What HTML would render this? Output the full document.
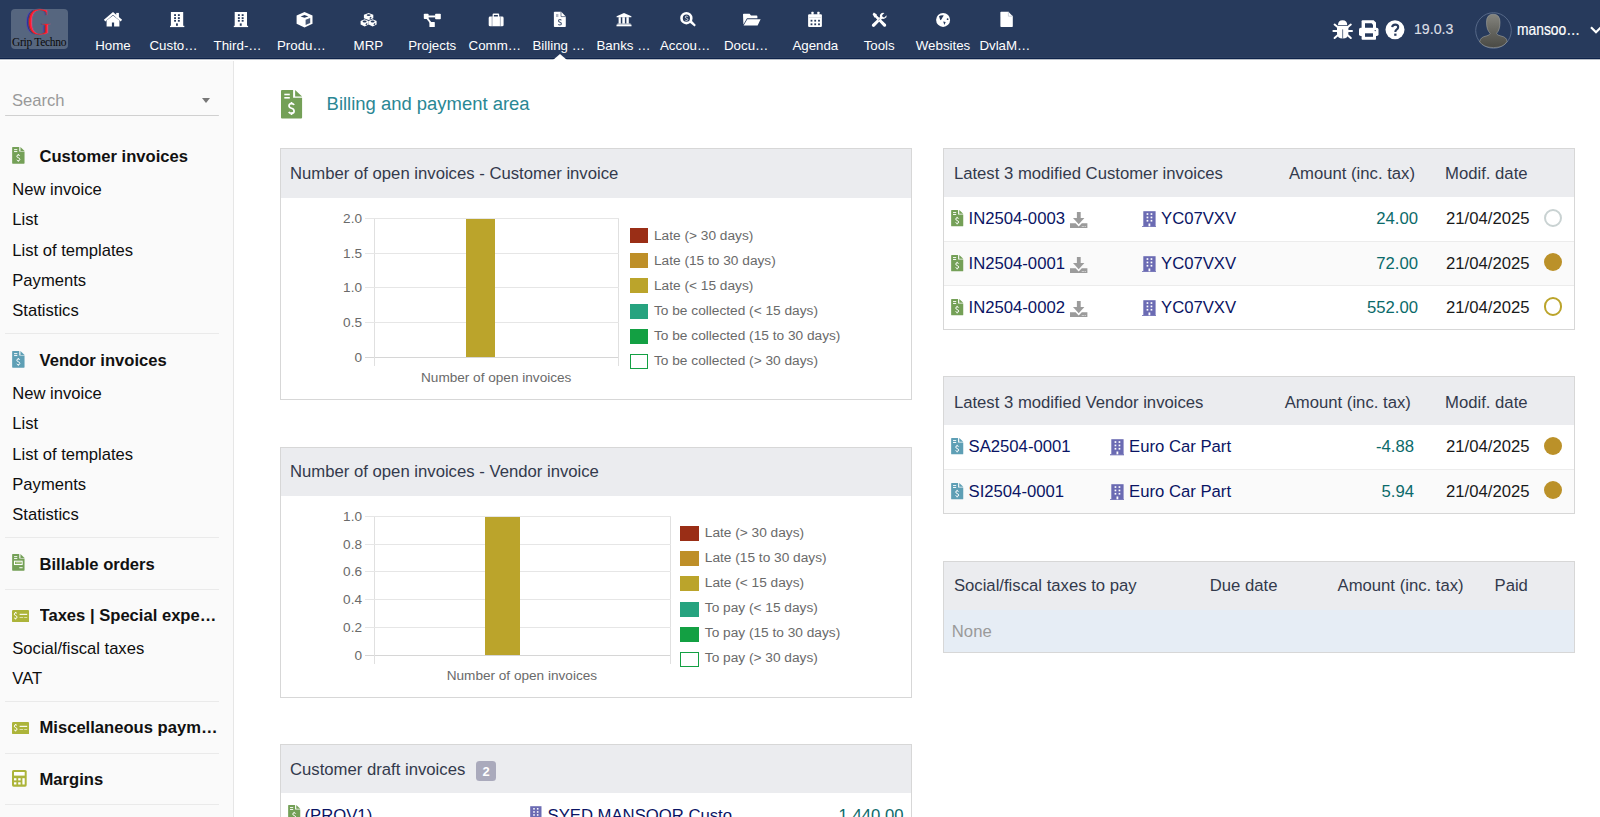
<!DOCTYPE html>
<html><head><meta charset="utf-8">
<style>
*{box-sizing:border-box;margin:0;padding:0}
html,body{width:1600px;height:817px;overflow:hidden;background:#fff;font-family:"Liberation Sans",sans-serif;color:#222}
.abs{position:absolute}
.t{position:absolute;white-space:nowrap;line-height:20px}
</style></head><body>

<div class="abs" style="left:0;top:0;width:1600px;height:58px;background:#273a5c"></div>
<div class="abs" style="left:0;top:57px;width:1600px;height:1px;background:#2c3f61"></div>
<div class="abs" style="left:0;top:58px;width:1600px;height:1px;background:#0d2249"></div>
<div class="abs" style="left:0;top:59px;width:1600px;height:1px;background:#b9bfc8"></div>
<div class="abs" style="left:11px;top:9px;width:57px;height:40px;border-radius:4px;background:#56667f"></div>
<div class="abs" style="left:24.5px;top:1.7px;font-family:'Liberation Serif',serif;font-size:39px;line-height:39px;color:#2b2bb0;transform:scaleX(0.87);transform-origin:0 0;-webkit-text-stroke:0.7px #56667f">G</div>
<div class="abs" style="left:27px;top:1.7px;font-family:'Liberation Serif',serif;font-size:39px;line-height:39px;color:#ff1a2a;transform:scaleX(0.85);transform-origin:0 0;-webkit-text-stroke:0.7px #56667f">G</div>
<div class="abs" style="left:12px;top:36px;width:57px;font-family:'Liberation Serif',serif;font-size:11.5px;line-height:12px;color:#0a0a0a;letter-spacing:-0.3px;white-space:nowrap">Grip Techno</div>
<div class="t" style="left:73.0px;width:80px;text-align:center;top:35.6px;font-size:13.3px;color:#fff">Home</div>
<div class="t" style="left:149.5px;top:35.6px;font-size:13.3px;color:#fff">Custo…</div>
<div class="t" style="left:213.6px;top:35.6px;font-size:13.3px;color:#fff">Third-…</div>
<div class="t" style="left:277px;top:35.6px;font-size:13.3px;color:#fff">Produ…</div>
<div class="t" style="left:328.4px;width:80px;text-align:center;top:35.6px;font-size:13.3px;color:#fff">MRP</div>
<div class="t" style="left:392.25px;width:80px;text-align:center;top:35.6px;font-size:13.3px;color:#fff">Projects</div>
<div class="t" style="left:468.6px;top:35.6px;font-size:13.3px;color:#fff">Comm…</div>
<div class="t" style="left:532.5px;top:35.6px;font-size:13.3px;color:#fff">Billing …</div>
<div class="t" style="left:596.5px;top:35.6px;font-size:13.3px;color:#fff">Banks …</div>
<div class="t" style="left:660px;top:35.6px;font-size:13.3px;color:#fff">Accou…</div>
<div class="t" style="left:724px;top:35.6px;font-size:13.3px;color:#fff">Docu…</div>
<div class="t" style="left:775.35px;width:80px;text-align:center;top:35.6px;font-size:13.3px;color:#fff">Agenda</div>
<div class="t" style="left:839.2px;width:80px;text-align:center;top:35.6px;font-size:13.3px;color:#fff">Tools</div>
<div class="t" style="left:903.0500000000001px;width:80px;text-align:center;top:35.6px;font-size:13.3px;color:#fff">Websites</div>
<div class="t" style="left:979.4px;top:35.6px;font-size:13.3px;color:#fff">DvlaM…</div>
<svg class="abs" style="left:0;top:0" width="1600" height="59" viewBox="0 0 1600 59"><path d="M104.6 20.6 L113 13.4 L121.4 20.6" fill="none" stroke="#fff" stroke-width="2.1" stroke-linejoin="miter"/><path d="M106.6 20.6 L113 15.4 L119.4 20.6 V26.4 H114.1 V22.6 H111.9 V26.4 H106.6 Z" fill="#fff"/><rect x="116.2" y="12.9" width="2.7" height="4.6" fill="#fff"/><rect x="170.9" y="12" width="12.3" height="14" fill="#fff"/><rect x="170" y="25.8" width="14.3" height="1.3" fill="#fff"/><rect x="174.1" y="14.2" width="1.9" height="1.8" fill="#273a5c"/><rect x="174.1" y="17.2" width="1.9" height="1.8" fill="#273a5c"/><rect x="174.1" y="19.9" width="1.9" height="1.8" fill="#273a5c"/><rect x="177.9" y="14.2" width="1.9" height="1.8" fill="#273a5c"/><rect x="177.9" y="17.2" width="1.9" height="1.8" fill="#273a5c"/><rect x="177.9" y="19.9" width="1.9" height="1.8" fill="#273a5c"/><rect x="176" y="23.4" width="1.9" height="2.4" fill="#273a5c"/><rect x="234.70000000000002" y="12" width="12.3" height="14" fill="#fff"/><rect x="233.8" y="25.8" width="14.3" height="1.3" fill="#fff"/><rect x="237.9" y="14.2" width="1.9" height="1.8" fill="#273a5c"/><rect x="237.9" y="17.2" width="1.9" height="1.8" fill="#273a5c"/><rect x="237.9" y="19.9" width="1.9" height="1.8" fill="#273a5c"/><rect x="241.70000000000002" y="14.2" width="1.9" height="1.8" fill="#273a5c"/><rect x="241.70000000000002" y="17.2" width="1.9" height="1.8" fill="#273a5c"/><rect x="241.70000000000002" y="19.9" width="1.9" height="1.8" fill="#273a5c"/><rect x="239.8" y="23.4" width="1.9" height="2.4" fill="#273a5c"/><path d="M304.5 12 L312.5 15.4 V23.8 L304.5 27.4 L296.6 23.8 V15.4 Z" fill="#fff"/><path d="M300.6 16.4 L304.5 15 L308.4 16.4 L304.5 17.8 Z" fill="#273a5c"/><path d="M305.6 19.8 L310.2 17.9 V23 L305.6 25 Z" fill="#273a5c" opacity="0.85"/><path d="M363.90000000000003 14.700000000000001 L368.6 12.9 L373.3 14.700000000000001 V18.3 L368.6 20.1 L363.90000000000003 18.3 Z" fill="#fff"/><ellipse cx="368.6" cy="15.100000000000001" rx="2" ry="0.9" fill="#273a5c"/><path d="M369.8 18.5 L371.20000000000005 17.1" stroke="#273a5c" stroke-width="1.1"/><path d="M360.6 21.1 L364.6 19.3 L368.6 21.1 V24.599999999999998 L364.6 26.4 L360.6 24.599999999999998 Z" fill="#fff"/><ellipse cx="364.6" cy="21.5" rx="2" ry="0.9" fill="#273a5c"/><path d="M365.8 24.9 L367.20000000000005 23.5" stroke="#273a5c" stroke-width="1.1"/><path d="M368.6 21.1 L372.6 19.3 L376.6 21.1 V24.599999999999998 L372.6 26.4 L368.6 24.599999999999998 Z" fill="#fff"/><ellipse cx="372.6" cy="21.5" rx="2" ry="0.9" fill="#273a5c"/><path d="M373.8 24.9 L375.20000000000005 23.5" stroke="#273a5c" stroke-width="1.1"/><rect x="423.8" y="13.7" width="4.8" height="5.3" rx="0.8" fill="#fff"/><rect x="435.1" y="13.7" width="5.7" height="5.6" rx="0.8" fill="#fff"/><rect x="429.4" y="22" width="5.4" height="5.1" rx="0.6" fill="#fff"/><rect x="428" y="15.5" width="7.5" height="1.9" fill="#fff"/><path d="M426.2 18.4 L427.8 17.4 L431.6 22.4 L430 23.2 Z" fill="#fff"/><path d="M492.6 17 V14.6 Q492.6 13.6 493.6 13.6 H498.2 Q499.2 13.6 499.2 14.6 V17 H497.9 V15 H493.9 V17 Z" fill="#fff"/><rect x="488.7" y="16.6" width="14.9" height="9.7" rx="1.4" fill="#fff"/><rect x="491.7" y="16.6" width="0.7" height="9.7" fill="#273a5c" opacity="0.55"/><rect x="499.9" y="16.6" width="0.7" height="9.7" fill="#273a5c" opacity="0.55"/><path d="M553.9 12.6 Q553.9 11.8 554.7 11.8 H561.2 L565.8 16.4 V26.3 Q565.8 27.1 565 27.1 H554.7 Q553.9 27.1 553.9 26.3 Z" fill="#fff"/><path d="M561 11.8 V16.6 H565.8" fill="none" stroke="#273a5c" stroke-width="0.9" opacity="0.7"/><rect x="556" y="14" width="2.4" height="3" fill="#b4b8c4"/><path d="M561.3 20.4 Q561 19.5 559.9 19.5 Q558.5 19.5 558.5 20.7 Q558.5 21.8 559.9 22.2 Q561.4 22.6 561.4 23.8 Q561.4 25 559.9 25 Q558.7 25 558.4 24.2" fill="none" stroke="#273a5c" stroke-width="1.1" opacity="0.85"/><path d="M624 13.1 L631.4 16.2 V17.2 H616.6 V16.2 Z" fill="#fff"/><rect x="618.6" y="17.2" width="2.2" height="6.4" fill="#fff"/><rect x="622.3" y="17.2" width="2.6" height="6.4" fill="#fff"/><rect x="626.4" y="17.2" width="2.4" height="6.4" fill="#fff"/><rect x="617.4" y="23.6" width="13.2" height="1" fill="#fff"/><rect x="616.5" y="24.6" width="15" height="1.7" fill="#fff"/><circle cx="686.4" cy="18.2" r="4.9" fill="none" stroke="#fff" stroke-width="2.6"/><path d="M689.6 22.4 L691.6 20.6 L695.6 24.8 Q695.7 26 694.5 26.6 Z" fill="#fff"/><path d="M687.9 16.8 Q687.6 16.1 686.5 16.1 Q685.3 16.1 685.3 17.1 Q685.3 18 686.5 18.3 Q687.8 18.6 687.8 19.5 Q687.8 20.5 686.5 20.5 Q685.4 20.5 685.1 19.8" fill="none" stroke="#dfe3ea" stroke-width="0.9"/><path d="M743 14.6 Q743 13.8 743.8 13.8 H749.6 L751 15.6 H756.6 Q757.4 15.6 757.4 16.4 V18.3 H747 L743.4 24.6 Z" fill="#fff"/><path d="M747.3 19.2 H760.6 L757.6 25.5 H743.6 Z" fill="#fff"/><rect x="808.1" y="14.2" width="13.8" height="12.9" rx="1" fill="#fff"/><rect x="811.4" y="11.8" width="2.2" height="3" rx="0.4" fill="#fff"/><rect x="817.3" y="11.8" width="2.2" height="3" rx="0.4" fill="#fff"/><rect x="809" y="17.4" width="12" height="0.5" fill="#273a5c" opacity="0.3"/><rect x="810.6" y="19.8" width="1.8" height="1.8" fill="#273a5c"/><rect x="810.6" y="23.400000000000002" width="1.8" height="1.8" fill="#273a5c"/><rect x="814.3000000000001" y="19.8" width="1.8" height="1.8" fill="#273a5c"/><rect x="814.3000000000001" y="23.400000000000002" width="1.8" height="1.8" fill="#273a5c"/><rect x="818.1" y="19.8" width="1.8" height="1.8" fill="#273a5c"/><rect x="818.1" y="23.400000000000002" width="1.8" height="1.8" fill="#273a5c"/><path d="M872.6 14.2 L873.9 12.5 L876.8 14.6 V15.6 L886 24.2 Q886.6 25.6 885.6 26.5 Q884.5 27.2 883.4 26.3 L875.3 17.5 H874.4 Z" fill="#fff"/><path d="M886.6 15.2 L884.3 17.5 L882.6 17 L882.1 15.3 L884.4 13 Q881.5 12.1 880.2 14.4 Q879.6 15.7 880 16.9 L872.2 24.2 Q871.3 25.6 872.4 26.6 Q873.5 27.4 874.6 26.5 L882 18.8 Q883.4 19.2 884.7 18.6 Q887.2 17.4 886.6 15.2 Z" fill="#fff"/><path d="M878.2 20.5 L880.2 18.6" stroke="#273a5c" stroke-width="0.6" opacity="0.7"/><circle cx="943.1" cy="19.9" r="7" fill="#fff"/><path d="M939 16.2 Q940.6 15 943.8 15.4 L942.6 17.2 L941.4 19.4 L940.3 20.3 Z" fill="#273a5c"/><path d="M943.2 21.6 L945.7 22 L944.4 25 Z" fill="#273a5c"/><circle cx="947.6" cy="19.2" r="0.9" fill="#273a5c"/><path d="M1000.4 12.6 Q1000.4 11.8 1001.2 11.8 H1008.4 L1012.8 16.2 V26.3 Q1012.8 27.1 1012 27.1 H1001.2 Q1000.4 27.1 1000.4 26.3 Z" fill="#fff"/><path d="M1008.4 11.8 V16.2 H1012.8" fill="none" stroke="#c0c6d2" stroke-width="0.8"/></svg>
<div class="abs" style="left:552.6px;top:54px;width:0;height:0;border-left:7px solid transparent;border-right:7px solid transparent;border-bottom:6px solid #fff"></div>
<svg class="abs" style="left:0;top:0" width="1600" height="59" viewBox="0 0 1600 59"><path d="M1338 25.3 Q1338 20.3 1342.6 20.3 Q1347.2 20.3 1347.2 25.3 Z" fill="#fff"/><path d="M1337 26.1 H1348.4 V33 Q1348.4 38.6 1342.7 38.6 Q1337 38.6 1337 33 Z" fill="#fff"/><g stroke="#fff" stroke-width="2" stroke-linecap="round"><path d="M1334.6 24.6 L1338.2 27.6"/><path d="M1350.8 24.6 L1347.2 27.6"/><path d="M1333.4 31 H1337.6"/><path d="M1352 31 H1347.8"/><path d="M1334.6 38 L1338 35"/><path d="M1350.8 38 L1347.4 35"/></g><rect x="1342.4" y="29.4" width="0.7" height="9.2" fill="#273a5c"/><path d="M1361.6 21.3 Q1361.6 20.3 1362.6 20.3 H1373.6 L1376 22.6 V28.5 H1361.6 Z" fill="#fff"/><path d="M1365 23.3 H1371.6 L1373 24.7 V28.5 H1365 Z" fill="#273a5c"/><rect x="1359" y="27.8" width="19.5" height="8.2" rx="1.8" fill="#fff"/><rect x="1361.6" y="32.4" width="14.4" height="7.4" rx="0.8" fill="#fff"/><rect x="1365" y="33.3" width="8" height="3.5" fill="#273a5c"/><circle cx="1375.2" cy="30.6" r="0.7" fill="#273a5c"/><circle cx="1395" cy="29.8" r="9.5" fill="#fff"/><path d="M1392.2 27.2 Q1392.4 24.6 1395.2 24.6 Q1398.2 24.6 1398.2 27.1 Q1398.2 28.6 1396.6 29.6 Q1395.4 30.4 1395.4 31.6 V32" fill="none" stroke="#273a5c" stroke-width="2.1"/><rect x="1394.2" y="33.6" width="2.3" height="2.2" fill="#273a5c"/></svg>
<div class="t" style="left:1413.7px;top:18.6px;font-size:14.8px;color:#dcdfe5;transform:scaleX(0.955);transform-origin:0 0;-webkit-text-stroke:0.15px #dcdfe5">19.0.3</div>
<svg class="abs" style="left:1475px;top:12px;" width="37" height="37" viewBox="0 0 37 37"><defs><linearGradient id="ag" x1="0" y1="0" x2="0" y2="1"><stop offset="0" stop-color="#85857f"/><stop offset="0.55" stop-color="#62625c"/><stop offset="1" stop-color="#4a4a45"/></linearGradient></defs><circle cx="18.5" cy="18.5" r="17.8" fill="none" stroke="#5b6d8c" stroke-width="0.9"/><path d="M11.5 10.2 Q11.5 2.2 18.2 2.2 Q25 2.2 25 10.2 Q25 18 21.6 21.3 Q21.8 23.3 26 24 Q32 25.2 32 29.6 Q28.5 35.6 18.5 35.6 Q8.5 35.6 4.6 29.8 Q5.4 25 11.2 24 Q15 23.2 15.2 21.3 Q11.5 18 11.5 10.2 Z" fill="url(#ag)" stroke="#b0b0a8" stroke-width="0.5"/></svg>
<div class="t" style="left:1517px;top:19.6px;font-size:16px;color:#fff;transform:scaleX(0.864);transform-origin:0 0;-webkit-text-stroke:0.2px #fff">mansoo…</div>
<svg class="abs" style="left:1590px;top:26px;" width="12" height="8" viewBox="0 0 12 8"><path d="M1 1.2 L6 6.2 L11 1.2" fill="none" stroke="#fff" stroke-width="2.2"/></svg>
<div class="abs" style="left:0;top:61px;width:233px;height:756px;background:#fafafa"></div>
<div class="abs" style="left:233px;top:61px;width:1px;height:756px;background:#e6e6e6"></div>
<div class="t" style="left:12px;top:90.5px;font-size:16.6px;color:#999">Search</div>
<div class="abs" style="left:202px;top:98px;width:0;height:0;border-left:4.5px solid transparent;border-right:4.5px solid transparent;border-top:5px solid #777"></div>
<div class="abs" style="left:5px;top:115px;width:214px;height:1px;background:#d0d0d0;border-radius:1px"></div>
<svg class="abs" style="left:11.9px;top:147.3px;overflow:visible" width="12.7" height="16.7" viewBox="0 0 21.1 28.4"><path d="M0 1 Q0 0 1 0 H12.1 V7.8 H21.1 V27.4 Q21.1 28.4 20.1 28.4 H1 Q0 28.4 0 27.4 Z" fill="#74a057"/><path d="M14.1 0 V6.6 H21.1 Z" fill="#74a057"/><rect x="3.3" y="3.7" width="5.5" height="1.6" fill="#fff"/><rect x="3.3" y="7" width="5.5" height="1.6" fill="#fff"/><path d="M13.1 15 Q12.5 13.7 10.5 13.7 Q8 13.7 8 15.8 Q8 17.6 10.5 18.3 Q13.1 19 13.1 21.2 Q13.1 23.2 10.5 23.2 Q8.4 23.2 7.8 21.8 M10.5 12 V13.7 M10.5 23.2 V25" fill="none" stroke="#fff" stroke-width="1.7"/></svg>
<div class="t" style="left:39.5px;top:147px;font-size:16.6px;font-weight:bold;color:#111">Customer invoices</div>
<div class="t" style="left:12.3px;top:180px;font-size:16.6px;color:#0e0e0e">New invoice</div>
<div class="t" style="left:12.3px;top:210px;font-size:16.6px;color:#0e0e0e">List</div>
<div class="t" style="left:12.3px;top:240.5px;font-size:16.6px;color:#0e0e0e">List of templates</div>
<div class="t" style="left:12.3px;top:271px;font-size:16.6px;color:#0e0e0e">Payments</div>
<div class="t" style="left:12.3px;top:301px;font-size:16.6px;color:#0e0e0e">Statistics</div>
<div class="abs" style="left:5px;top:333px;width:214px;height:1px;background:#eaeaea"></div>
<svg class="abs" style="left:11.9px;top:351.3px;overflow:visible" width="12.7" height="16.7" viewBox="0 0 21.1 28.4"><path d="M0 1 Q0 0 1 0 H12.1 V7.8 H21.1 V27.4 Q21.1 28.4 20.1 28.4 H1 Q0 28.4 0 27.4 Z" fill="#5e9fb5"/><path d="M14.1 0 V6.6 H21.1 Z" fill="#5e9fb5"/><rect x="3.3" y="3.7" width="5.5" height="1.6" fill="#fff"/><rect x="3.3" y="7" width="5.5" height="1.6" fill="#fff"/><path d="M13.1 15 Q12.5 13.7 10.5 13.7 Q8 13.7 8 15.8 Q8 17.6 10.5 18.3 Q13.1 19 13.1 21.2 Q13.1 23.2 10.5 23.2 Q8.4 23.2 7.8 21.8 M10.5 12 V13.7 M10.5 23.2 V25" fill="none" stroke="#fff" stroke-width="1.7"/></svg>
<div class="t" style="left:39.5px;top:351px;font-size:16.6px;font-weight:bold;color:#111">Vendor invoices</div>
<div class="t" style="left:12.3px;top:384px;font-size:16.6px;color:#0e0e0e">New invoice</div>
<div class="t" style="left:12.3px;top:414px;font-size:16.6px;color:#0e0e0e">List</div>
<div class="t" style="left:12.3px;top:444.5px;font-size:16.6px;color:#0e0e0e">List of templates</div>
<div class="t" style="left:12.3px;top:475px;font-size:16.6px;color:#0e0e0e">Payments</div>
<div class="t" style="left:12.3px;top:505px;font-size:16.6px;color:#0e0e0e">Statistics</div>
<div class="abs" style="left:5px;top:537px;width:214px;height:1px;background:#eaeaea"></div>
<svg class="abs" style="left:11.9px;top:554.4px;" width="12.7" height="16.7" viewBox="0 0 21.1 28.4"><path d="M0 1 Q0 0 1 0 H12.1 V7.8 H21.1 V27.4 Q21.1 28.4 20.1 28.4 H1 Q0 28.4 0 27.4 Z" fill="#74a057"/><path d="M14.1 0 V6.6 H21.1 Z" fill="#74a057"/><rect x="3.3" y="3.7" width="5.5" height="1.6" fill="#fff"/><rect x="3.3" y="7" width="5.5" height="1.6" fill="#fff"/><rect x="4" y="12.3" width="13" height="5.6" fill="none" stroke="#fff" stroke-width="1.8"/><rect x="6" y="14.4" width="9" height="1.4" fill="#e0e8b0"/><rect x="12.2" y="22.5" width="5.6" height="1.7" fill="#fff"/></svg>
<div class="t" style="left:39.5px;top:555px;font-size:16.6px;font-weight:bold;color:#111">Billable orders</div>
<div class="abs" style="left:5px;top:589px;width:214px;height:1px;background:#eaeaea"></div>
<svg class="abs" style="left:11.9px;top:609.8px;" width="17.1" height="12.3" viewBox="0 0 17.1 12.3"><rect x="0" y="0" width="17.1" height="12.3" rx="1.2" fill="#acb43a"/><path d="M5 3.6 Q4.6 2.9 3.6 2.9 Q2.3 2.9 2.3 4.1 Q2.3 5.2 3.6 5.6 Q5 6 5 7.2 Q5 8.4 3.6 8.4 Q2.5 8.4 2.1 7.7 M3.6 2 V2.9 M3.6 8.4 V9.4" fill="none" stroke="#fff" stroke-width="1"/><rect x="7.6" y="3.8" width="7.6" height="1.1" fill="#fff"/><rect x="7.6" y="7" width="3.6" height="0.8" fill="#e8ecc0"/><rect x="12.2" y="7" width="3" height="0.8" fill="#e8ecc0"/></svg>
<div class="t" style="left:39.5px;top:606px;width:180px;overflow:hidden;text-overflow:ellipsis;font-size:16.6px;font-weight:bold;color:#111">Taxes | Special expenses</div>
<div class="t" style="left:12.3px;top:638.5px;font-size:16.6px;color:#0e0e0e">Social/fiscal taxes</div>
<div class="t" style="left:12.3px;top:668.5px;font-size:16.6px;color:#0e0e0e">VAT</div>
<div class="abs" style="left:5px;top:701px;width:214px;height:1px;background:#eaeaea"></div>
<svg class="abs" style="left:11.9px;top:721.8px;" width="17.1" height="12.3" viewBox="0 0 17.1 12.3"><rect x="0" y="0" width="17.1" height="12.3" rx="1.2" fill="#acb43a"/><path d="M5 3.6 Q4.6 2.9 3.6 2.9 Q2.3 2.9 2.3 4.1 Q2.3 5.2 3.6 5.6 Q5 6 5 7.2 Q5 8.4 3.6 8.4 Q2.5 8.4 2.1 7.7 M3.6 2 V2.9 M3.6 8.4 V9.4" fill="none" stroke="#fff" stroke-width="1"/><rect x="7.6" y="3.8" width="7.6" height="1.1" fill="#fff"/><rect x="7.6" y="7" width="3.6" height="0.8" fill="#e8ecc0"/><rect x="12.2" y="7" width="3" height="0.8" fill="#e8ecc0"/></svg>
<div class="t" style="left:39.5px;top:718px;width:180px;overflow:hidden;text-overflow:ellipsis;font-size:16.6px;font-weight:bold;color:#111">Miscellaneous payments</div>
<div class="abs" style="left:5px;top:753px;width:214px;height:1px;background:#eaeaea"></div>
<svg class="abs" style="left:11.9px;top:770.3px;" width="14.7" height="16.7" viewBox="0 0 14.7 16.7"><rect x="0" y="0" width="14.7" height="16.7" rx="1.6" fill="#acb43a"/><rect x="2" y="2" width="10.7" height="3.6" fill="#fff"/><g fill="#fff"><rect x="2" y="8.2" width="2.4" height="2.2"/><rect x="6.2" y="8.2" width="2.4" height="2.2"/><rect x="2" y="12.3" width="2.4" height="2.2"/><rect x="6.2" y="12.3" width="2.4" height="2.2"/><rect x="10.4" y="8.2" width="2.3" height="6.3"/></g></svg>
<div class="t" style="left:39.5px;top:770px;font-size:16.6px;font-weight:bold;color:#111">Margins</div>
<div class="abs" style="left:5px;top:804px;width:214px;height:1px;background:#eaeaea"></div>
<svg class="abs" style="left:281.3px;top:90.2px;overflow:visible" width="21.1" height="28.4" viewBox="0 0 21.1 28.4"><path d="M0 1 Q0 0 1 0 H12.1 V7.8 H21.1 V27.4 Q21.1 28.4 20.1 28.4 H1 Q0 28.4 0 27.4 Z" fill="#74a057"/><path d="M14.1 0 V6.6 H21.1 Z" fill="#74a057"/><rect x="3.3" y="3.7" width="5.5" height="1.6" fill="#fff"/><rect x="3.3" y="7" width="5.5" height="1.6" fill="#fff"/><path d="M13.1 15 Q12.5 13.7 10.5 13.7 Q8 13.7 8 15.8 Q8 17.6 10.5 18.3 Q13.1 19 13.1 21.2 Q13.1 23.2 10.5 23.2 Q8.4 23.2 7.8 21.8 M10.5 12 V13.7 M10.5 23.2 V25" fill="none" stroke="#fff" stroke-width="1.7"/></svg>
<div class="t" style="left:326.6px;top:94.2px;font-size:18.45px;color:#2a8794">Billing and payment area</div>
<div class="abs" style="left:280px;top:148px;width:632px;height:252px;border:1px solid #d7d7d7;background:#fff"></div>
<div class="abs" style="left:281px;top:149px;width:630px;height:49px;background:#ebecef"></div>
<div class="t" style="left:290px;top:164.2px;font-size:16.7px;color:#333a4c;">Number of open invoices - Customer invoice</div>
<div class="abs" style="left:373.5px;top:218.4px;width:245.5px;height:138.9px;border-left:1px solid #e0e0e0;border-right:1px solid #e0e0e0"></div>
<div class="abs" style="left:365px;top:217.9px;width:254px;height:1px;background:#e6e6e6"></div>
<div class="t" style="left:322px;width:40px;text-align:right;top:208.8px;font-size:13.6px;color:#6a6a6a">2.0</div>
<div class="abs" style="left:365px;top:252.625px;width:254px;height:1px;background:#e6e6e6"></div>
<div class="t" style="left:322px;width:40px;text-align:right;top:243.525px;font-size:13.6px;color:#6a6a6a">1.5</div>
<div class="abs" style="left:365px;top:287.35px;width:254px;height:1px;background:#e6e6e6"></div>
<div class="t" style="left:322px;width:40px;text-align:right;top:278.25px;font-size:13.6px;color:#6a6a6a">1.0</div>
<div class="abs" style="left:365px;top:322.07500000000005px;width:254px;height:1px;background:#e6e6e6"></div>
<div class="t" style="left:322px;width:40px;text-align:right;top:312.975px;font-size:13.6px;color:#6a6a6a">0.5</div>
<div class="abs" style="left:365px;top:356.8px;width:254px;height:1px;background:#d6d6d6"></div>
<div class="t" style="left:322px;width:40px;text-align:right;top:347.7px;font-size:13.6px;color:#6a6a6a">0</div>
<div class="abs" style="left:373.5px;top:357.3px;width:1px;height:9px;background:#e0e0e0"></div>
<div class="abs" style="left:618px;top:357.3px;width:1px;height:9px;background:#e0e0e0"></div>
<div class="abs" style="left:466.2px;top:219.4px;width:28.5px;height:137.9px;background:#bba42b"></div>
<div class="t" style="left:421px;top:368px;font-size:13.6px;color:#6a6a6a">Number of open invoices</div>
<div class="abs" style="left:629.5px;top:228.2px;width:18.5px;height:15px;background:#9a2e16"></div>
<div class="t" style="left:654.0px;top:225.7px;font-size:13.7px;color:#6a6a6a">Late (&gt; 30 days)</div>
<div class="abs" style="left:629.5px;top:253.3px;width:18.5px;height:15px;background:#be8f28"></div>
<div class="t" style="left:654.0px;top:250.8px;font-size:13.7px;color:#6a6a6a">Late (15 to 30 days)</div>
<div class="abs" style="left:629.5px;top:278.4px;width:18.5px;height:15px;background:#bba42b"></div>
<div class="t" style="left:654.0px;top:275.9px;font-size:13.7px;color:#6a6a6a">Late (&lt; 15 days)</div>
<div class="abs" style="left:629.5px;top:303.5px;width:18.5px;height:15px;background:#26a37f"></div>
<div class="t" style="left:654.0px;top:301.0px;font-size:13.7px;color:#6a6a6a">To be collected (&lt; 15 days)</div>
<div class="abs" style="left:629.5px;top:328.6px;width:18.5px;height:15px;background:#13a043"></div>
<div class="t" style="left:654.0px;top:326.1px;font-size:13.7px;color:#6a6a6a">To be collected (15 to 30 days)</div>
<div class="abs" style="left:629.5px;top:353.7px;width:18.5px;height:15px;border:1.3px solid #13a043;background:#fff"></div>
<div class="t" style="left:654.0px;top:351.2px;font-size:13.7px;color:#6a6a6a">To be collected (&gt; 30 days)</div>
<div class="abs" style="left:280px;top:447px;width:632px;height:251px;border:1px solid #d7d7d7;background:#fff"></div>
<div class="abs" style="left:281px;top:448px;width:630px;height:48px;background:#ebecef"></div>
<div class="t" style="left:290px;top:462.2px;font-size:16.7px;color:#333a4c;">Number of open invoices - Vendor invoice</div>
<div class="abs" style="left:373.5px;top:516.4px;width:297.5px;height:138.89999999999998px;border-left:1px solid #e0e0e0;border-right:1px solid #e0e0e0"></div>
<div class="abs" style="left:365px;top:515.9px;width:306px;height:1px;background:#e6e6e6"></div>
<div class="t" style="left:322px;width:40px;text-align:right;top:506.79999999999995px;font-size:13.6px;color:#6a6a6a">1.0</div>
<div class="abs" style="left:365px;top:543.68px;width:306px;height:1px;background:#e6e6e6"></div>
<div class="t" style="left:322px;width:40px;text-align:right;top:534.5799999999999px;font-size:13.6px;color:#6a6a6a">0.8</div>
<div class="abs" style="left:365px;top:571.4599999999999px;width:306px;height:1px;background:#e6e6e6"></div>
<div class="t" style="left:322px;width:40px;text-align:right;top:562.3599999999999px;font-size:13.6px;color:#6a6a6a">0.6</div>
<div class="abs" style="left:365px;top:599.24px;width:306px;height:1px;background:#e6e6e6"></div>
<div class="t" style="left:322px;width:40px;text-align:right;top:590.14px;font-size:13.6px;color:#6a6a6a">0.4</div>
<div class="abs" style="left:365px;top:627.02px;width:306px;height:1px;background:#e6e6e6"></div>
<div class="t" style="left:322px;width:40px;text-align:right;top:617.92px;font-size:13.6px;color:#6a6a6a">0.2</div>
<div class="abs" style="left:365px;top:654.8px;width:306px;height:1px;background:#d6d6d6"></div>
<div class="t" style="left:322px;width:40px;text-align:right;top:645.6999999999999px;font-size:13.6px;color:#6a6a6a">0</div>
<div class="abs" style="left:373.5px;top:655.3px;width:1px;height:9px;background:#e0e0e0"></div>
<div class="abs" style="left:670px;top:655.3px;width:1px;height:9px;background:#e0e0e0"></div>
<div class="abs" style="left:484.5px;top:517.4px;width:35.3px;height:137.89999999999998px;background:#bba42b"></div>
<div class="t" style="left:446.7px;top:666px;font-size:13.6px;color:#6a6a6a">Number of open invoices</div>
<div class="abs" style="left:680.3px;top:526.2px;width:18.5px;height:15px;background:#9a2e16"></div>
<div class="t" style="left:704.8px;top:522.8000000000001px;font-size:13.7px;color:#6a6a6a">Late (&gt; 30 days)</div>
<div class="abs" style="left:680.3px;top:551.3000000000001px;width:18.5px;height:15px;background:#be8f28"></div>
<div class="t" style="left:704.8px;top:547.9000000000001px;font-size:13.7px;color:#6a6a6a">Late (15 to 30 days)</div>
<div class="abs" style="left:680.3px;top:576.4000000000001px;width:18.5px;height:15px;background:#bba42b"></div>
<div class="t" style="left:704.8px;top:573.0000000000001px;font-size:13.7px;color:#6a6a6a">Late (&lt; 15 days)</div>
<div class="abs" style="left:680.3px;top:601.5px;width:18.5px;height:15px;background:#26a37f"></div>
<div class="t" style="left:704.8px;top:598.1px;font-size:13.7px;color:#6a6a6a">To pay (&lt; 15 days)</div>
<div class="abs" style="left:680.3px;top:626.6px;width:18.5px;height:15px;background:#13a043"></div>
<div class="t" style="left:704.8px;top:623.2px;font-size:13.7px;color:#6a6a6a">To pay (15 to 30 days)</div>
<div class="abs" style="left:680.3px;top:651.7px;width:18.5px;height:15px;border:1.3px solid #13a043;background:#fff"></div>
<div class="t" style="left:704.8px;top:648.3000000000001px;font-size:13.7px;color:#6a6a6a">To pay (&gt; 30 days)</div>
<div class="abs" style="left:280px;top:744px;width:632px;height:200px;border:1px solid #d7d7d7;background:#fff"></div>
<div class="abs" style="left:281px;top:745px;width:630px;height:48px;background:#ebecef"></div>
<div class="t" style="left:290px;top:759.7px;font-size:16.7px;color:#333a4c;">Customer draft invoices</div>
<div class="abs" style="left:476px;top:760.5px;width:20px;height:20.5px;border-radius:3.5px;background:#aaaabc;color:#fff;font-size:13px;font-weight:bold;text-align:center;line-height:21px">2</div>
<svg class="abs" style="left:288px;top:805.2px;overflow:visible" width="12.4" height="16.3" viewBox="0 0 21.1 28.4"><path d="M0 1 Q0 0 1 0 H12.1 V7.8 H21.1 V27.4 Q21.1 28.4 20.1 28.4 H1 Q0 28.4 0 27.4 Z" fill="#74a057"/><path d="M14.1 0 V6.6 H21.1 Z" fill="#74a057"/><rect x="3.3" y="3.7" width="5.5" height="1.6" fill="#fff"/><rect x="3.3" y="7" width="5.5" height="1.6" fill="#fff"/><path d="M13.1 15 Q12.5 13.7 10.5 13.7 Q8 13.7 8 15.8 Q8 17.6 10.5 18.3 Q13.1 19 13.1 21.2 Q13.1 23.2 10.5 23.2 Q8.4 23.2 7.8 21.8 M10.5 12 V13.7 M10.5 23.2 V25" fill="none" stroke="#fff" stroke-width="1.7"/></svg>
<div class="t" style="left:304.5px;top:805.7px;font-size:16.7px;color:#0a1464;">(PROV1)</div>
<svg class="abs" style="left:529px;top:806.4px;" width="13.6" height="15" viewBox="0 0 14.8 16.3"><rect x="1.3" y="0.2" width="12.3" height="15.3" fill="#6b6bb3"/><rect x="0" y="15.2" width="14.8" height="1.1" fill="#6b6bb3"/><g fill="#fff"><rect x="4.6" y="2.2" width="1.7" height="1.7"/><rect x="8.6" y="2.2" width="1.7" height="1.7"/><rect x="4.6" y="5.6" width="1.7" height="1.7"/><rect x="8.6" y="5.6" width="1.7" height="1.7"/><rect x="4.6" y="8.9" width="1.7" height="1.7"/><rect x="8.6" y="8.9" width="1.7" height="1.7"/><rect x="6.5" y="12.5" width="1.8" height="2.8"/></g></svg>
<div class="t" style="left:547.5px;top:805.7px;font-size:16.7px;color:#0a1464;">SYED MANSOOR Custo</div>
<div class="t" style="left:703.5px;width:200px;text-align:right;top:805.7px;font-size:16.7px;color:#0b6a6a">1 440.00</div>
<div class="abs" style="left:943px;top:148px;width:632px;height:182px;border:1px solid #d7d7d7;background:#fff"></div>
<div class="abs" style="left:944px;top:149px;width:630px;height:48px;background:#ebecef"></div>
<div class="t" style="left:953.9px;top:164.2px;font-size:16.7px;color:#333a4c;">Latest 3 modified Customer invoices</div>
<div class="t" style="left:1288.9px;top:164.2px;font-size:16.7px;color:#333a4c;">Amount (inc. tax)</div>
<div class="t" style="left:1445px;top:164.2px;font-size:16.7px;color:#333a4c;">Modif. date</div>
<svg class="abs" style="left:950.9px;top:209.7px;overflow:visible" width="12.4" height="16.3" viewBox="0 0 21.1 28.4"><path d="M0 1 Q0 0 1 0 H12.1 V7.8 H21.1 V27.4 Q21.1 28.4 20.1 28.4 H1 Q0 28.4 0 27.4 Z" fill="#74a057"/><path d="M14.1 0 V6.6 H21.1 Z" fill="#74a057"/><rect x="3.3" y="3.7" width="5.5" height="1.6" fill="#fff"/><rect x="3.3" y="7" width="5.5" height="1.6" fill="#fff"/><path d="M13.1 15 Q12.5 13.7 10.5 13.7 Q8 13.7 8 15.8 Q8 17.6 10.5 18.3 Q13.1 19 13.1 21.2 Q13.1 23.2 10.5 23.2 Q8.4 23.2 7.8 21.8 M10.5 12 V13.7 M10.5 23.2 V25" fill="none" stroke="#fff" stroke-width="1.7"/></svg>
<div class="t" style="left:968.5px;top:208.7px;font-size:16.7px;color:#0a1464;">IN2504-0003</div>
<svg class="abs" style="left:1070.4px;top:211.7px;" width="17.4" height="16.1" viewBox="0 0 17.4 16.1"><rect x="6.9" y="0" width="3.8" height="6.3" fill="#9b9b9b"/><path d="M3 6.1 H14.4 L8.7 12.2 Z" fill="#9b9b9b"/><path d="M0 11.3 H5.6 L8.7 14.4 L11.8 11.3 H17.4 V16.1 H0 Z" fill="#9b9b9b"/><g fill="#e8e8e8"><rect x="11.8" y="14" width="0.9" height="0.9"/><rect x="13.3" y="14" width="0.9" height="0.9"/><rect x="14.8" y="14" width="0.9" height="0.9"/></g></svg>
<svg class="abs" style="left:1141.6px;top:210.7px;" width="14.8" height="16.3" viewBox="0 0 14.8 16.3"><rect x="1.3" y="0.2" width="12.3" height="15.3" fill="#6b6bb3"/><rect x="0" y="15.2" width="14.8" height="1.1" fill="#6b6bb3"/><g fill="#fff"><rect x="4.6" y="2.2" width="1.7" height="1.7"/><rect x="8.6" y="2.2" width="1.7" height="1.7"/><rect x="4.6" y="5.6" width="1.7" height="1.7"/><rect x="8.6" y="5.6" width="1.7" height="1.7"/><rect x="4.6" y="8.9" width="1.7" height="1.7"/><rect x="8.6" y="8.9" width="1.7" height="1.7"/><rect x="6.5" y="12.5" width="1.8" height="2.8"/></g></svg>
<div class="t" style="left:1161px;top:208.7px;font-size:16.7px;color:#0a1464;">YC07VXV</div>
<div class="t" style="left:1218px;width:200px;text-align:right;top:208.7px;font-size:16.7px;color:#0b6a6a">24.00</div>
<div class="t" style="left:1446px;top:208.7px;font-size:16.7px;color:#1a1a1a;">21/04/2025</div>
<div class="abs" style="left:1543.8px;top:208.60000000000002px;width:18.4px;height:18.4px;border-radius:50%;border:2px solid #c9d2d2"></div>
<div class="abs" style="left:944px;top:242px;width:630px;height:43px;background:#fafafa"></div>
<div class="abs" style="left:944px;top:240.5px;width:630px;height:1px;background:#ececec"></div>
<svg class="abs" style="left:950.9px;top:254.7px;overflow:visible" width="12.4" height="16.3" viewBox="0 0 21.1 28.4"><path d="M0 1 Q0 0 1 0 H12.1 V7.8 H21.1 V27.4 Q21.1 28.4 20.1 28.4 H1 Q0 28.4 0 27.4 Z" fill="#74a057"/><path d="M14.1 0 V6.6 H21.1 Z" fill="#74a057"/><rect x="3.3" y="3.7" width="5.5" height="1.6" fill="#fff"/><rect x="3.3" y="7" width="5.5" height="1.6" fill="#fff"/><path d="M13.1 15 Q12.5 13.7 10.5 13.7 Q8 13.7 8 15.8 Q8 17.6 10.5 18.3 Q13.1 19 13.1 21.2 Q13.1 23.2 10.5 23.2 Q8.4 23.2 7.8 21.8 M10.5 12 V13.7 M10.5 23.2 V25" fill="none" stroke="#fff" stroke-width="1.7"/></svg>
<div class="t" style="left:968.5px;top:253.7px;font-size:16.7px;color:#0a1464;">IN2504-0001</div>
<svg class="abs" style="left:1070.4px;top:256.7px;" width="17.4" height="16.1" viewBox="0 0 17.4 16.1"><rect x="6.9" y="0" width="3.8" height="6.3" fill="#9b9b9b"/><path d="M3 6.1 H14.4 L8.7 12.2 Z" fill="#9b9b9b"/><path d="M0 11.3 H5.6 L8.7 14.4 L11.8 11.3 H17.4 V16.1 H0 Z" fill="#9b9b9b"/><g fill="#e8e8e8"><rect x="11.8" y="14" width="0.9" height="0.9"/><rect x="13.3" y="14" width="0.9" height="0.9"/><rect x="14.8" y="14" width="0.9" height="0.9"/></g></svg>
<svg class="abs" style="left:1141.6px;top:255.7px;" width="14.8" height="16.3" viewBox="0 0 14.8 16.3"><rect x="1.3" y="0.2" width="12.3" height="15.3" fill="#6b6bb3"/><rect x="0" y="15.2" width="14.8" height="1.1" fill="#6b6bb3"/><g fill="#fff"><rect x="4.6" y="2.2" width="1.7" height="1.7"/><rect x="8.6" y="2.2" width="1.7" height="1.7"/><rect x="4.6" y="5.6" width="1.7" height="1.7"/><rect x="8.6" y="5.6" width="1.7" height="1.7"/><rect x="4.6" y="8.9" width="1.7" height="1.7"/><rect x="8.6" y="8.9" width="1.7" height="1.7"/><rect x="6.5" y="12.5" width="1.8" height="2.8"/></g></svg>
<div class="t" style="left:1161px;top:253.7px;font-size:16.7px;color:#0a1464;">YC07VXV</div>
<div class="t" style="left:1218px;width:200px;text-align:right;top:253.7px;font-size:16.7px;color:#0b6a6a">72.00</div>
<div class="t" style="left:1446px;top:253.7px;font-size:16.7px;color:#1a1a1a;">21/04/2025</div>
<div class="abs" style="left:1543.8px;top:252.8px;width:18.4px;height:18.4px;border-radius:50%;background:#bb9129"></div>
<div class="abs" style="left:944px;top:285.0px;width:630px;height:1px;background:#ececec"></div>
<svg class="abs" style="left:950.9px;top:299.2px;overflow:visible" width="12.4" height="16.3" viewBox="0 0 21.1 28.4"><path d="M0 1 Q0 0 1 0 H12.1 V7.8 H21.1 V27.4 Q21.1 28.4 20.1 28.4 H1 Q0 28.4 0 27.4 Z" fill="#74a057"/><path d="M14.1 0 V6.6 H21.1 Z" fill="#74a057"/><rect x="3.3" y="3.7" width="5.5" height="1.6" fill="#fff"/><rect x="3.3" y="7" width="5.5" height="1.6" fill="#fff"/><path d="M13.1 15 Q12.5 13.7 10.5 13.7 Q8 13.7 8 15.8 Q8 17.6 10.5 18.3 Q13.1 19 13.1 21.2 Q13.1 23.2 10.5 23.2 Q8.4 23.2 7.8 21.8 M10.5 12 V13.7 M10.5 23.2 V25" fill="none" stroke="#fff" stroke-width="1.7"/></svg>
<div class="t" style="left:968.5px;top:298.2px;font-size:16.7px;color:#0a1464;">IN2504-0002</div>
<svg class="abs" style="left:1070.4px;top:301.2px;" width="17.4" height="16.1" viewBox="0 0 17.4 16.1"><rect x="6.9" y="0" width="3.8" height="6.3" fill="#9b9b9b"/><path d="M3 6.1 H14.4 L8.7 12.2 Z" fill="#9b9b9b"/><path d="M0 11.3 H5.6 L8.7 14.4 L11.8 11.3 H17.4 V16.1 H0 Z" fill="#9b9b9b"/><g fill="#e8e8e8"><rect x="11.8" y="14" width="0.9" height="0.9"/><rect x="13.3" y="14" width="0.9" height="0.9"/><rect x="14.8" y="14" width="0.9" height="0.9"/></g></svg>
<svg class="abs" style="left:1141.6px;top:300.2px;" width="14.8" height="16.3" viewBox="0 0 14.8 16.3"><rect x="1.3" y="0.2" width="12.3" height="15.3" fill="#6b6bb3"/><rect x="0" y="15.2" width="14.8" height="1.1" fill="#6b6bb3"/><g fill="#fff"><rect x="4.6" y="2.2" width="1.7" height="1.7"/><rect x="8.6" y="2.2" width="1.7" height="1.7"/><rect x="4.6" y="5.6" width="1.7" height="1.7"/><rect x="8.6" y="5.6" width="1.7" height="1.7"/><rect x="4.6" y="8.9" width="1.7" height="1.7"/><rect x="8.6" y="8.9" width="1.7" height="1.7"/><rect x="6.5" y="12.5" width="1.8" height="2.8"/></g></svg>
<div class="t" style="left:1161px;top:298.2px;font-size:16.7px;color:#0a1464;">YC07VXV</div>
<div class="t" style="left:1218px;width:200px;text-align:right;top:298.2px;font-size:16.7px;color:#0b6a6a">552.00</div>
<div class="t" style="left:1446px;top:298.2px;font-size:16.7px;color:#1a1a1a;">21/04/2025</div>
<div class="abs" style="left:1543.8px;top:297.3px;width:18.4px;height:18.4px;border-radius:50%;border:2px solid #bba42b"></div>
<div class="abs" style="left:943px;top:376px;width:632px;height:138px;border:1px solid #d7d7d7;background:#fff"></div>
<div class="abs" style="left:944px;top:377px;width:630px;height:48px;background:#ebecef"></div>
<div class="t" style="left:953.9px;top:392.59999999999997px;font-size:16.7px;color:#333a4c;">Latest 3 modified Vendor invoices</div>
<div class="t" style="left:1284.7px;top:392.59999999999997px;font-size:16.7px;color:#333a4c;">Amount (inc. tax)</div>
<div class="t" style="left:1445px;top:392.59999999999997px;font-size:16.7px;color:#333a4c;">Modif. date</div>
<svg class="abs" style="left:950.9px;top:438.4px;overflow:visible" width="12.4" height="16.3" viewBox="0 0 21.1 28.4"><path d="M0 1 Q0 0 1 0 H12.1 V7.8 H21.1 V27.4 Q21.1 28.4 20.1 28.4 H1 Q0 28.4 0 27.4 Z" fill="#5e9fb5"/><path d="M14.1 0 V6.6 H21.1 Z" fill="#5e9fb5"/><rect x="3.3" y="3.7" width="5.5" height="1.6" fill="#fff"/><rect x="3.3" y="7" width="5.5" height="1.6" fill="#fff"/><path d="M13.1 15 Q12.5 13.7 10.5 13.7 Q8 13.7 8 15.8 Q8 17.6 10.5 18.3 Q13.1 19 13.1 21.2 Q13.1 23.2 10.5 23.2 Q8.4 23.2 7.8 21.8 M10.5 12 V13.7 M10.5 23.2 V25" fill="none" stroke="#fff" stroke-width="1.7"/></svg>
<div class="t" style="left:968.5px;top:437.4px;font-size:16.7px;color:#0a1464;">SA2504-0001</div>
<svg class="abs" style="left:1109.6px;top:439.4px;" width="14.8" height="16.3" viewBox="0 0 14.8 16.3"><rect x="1.3" y="0.2" width="12.3" height="15.3" fill="#6b6bb3"/><rect x="0" y="15.2" width="14.8" height="1.1" fill="#6b6bb3"/><g fill="#fff"><rect x="4.6" y="2.2" width="1.7" height="1.7"/><rect x="8.6" y="2.2" width="1.7" height="1.7"/><rect x="4.6" y="5.6" width="1.7" height="1.7"/><rect x="8.6" y="5.6" width="1.7" height="1.7"/><rect x="4.6" y="8.9" width="1.7" height="1.7"/><rect x="8.6" y="8.9" width="1.7" height="1.7"/><rect x="6.5" y="12.5" width="1.8" height="2.8"/></g></svg>
<div class="t" style="left:1129px;top:437.4px;font-size:16.7px;color:#0a1464;">Euro Car Part</div>
<div class="t" style="left:1214px;width:200px;text-align:right;top:437.4px;font-size:16.7px;color:#0b6a6a">-4.88</div>
<div class="t" style="left:1446px;top:437.4px;font-size:16.7px;color:#1a1a1a;">21/04/2025</div>
<div class="abs" style="left:1543.8px;top:436.8px;width:18.4px;height:18.4px;border-radius:50%;background:#bb9129"></div>
<div class="abs" style="left:944px;top:470px;width:630px;height:43px;background:#fafafa"></div>
<div class="abs" style="left:944px;top:469px;width:630px;height:1px;background:#ececec"></div>
<svg class="abs" style="left:950.9px;top:482.7px;overflow:visible" width="12.4" height="16.3" viewBox="0 0 21.1 28.4"><path d="M0 1 Q0 0 1 0 H12.1 V7.8 H21.1 V27.4 Q21.1 28.4 20.1 28.4 H1 Q0 28.4 0 27.4 Z" fill="#5e9fb5"/><path d="M14.1 0 V6.6 H21.1 Z" fill="#5e9fb5"/><rect x="3.3" y="3.7" width="5.5" height="1.6" fill="#fff"/><rect x="3.3" y="7" width="5.5" height="1.6" fill="#fff"/><path d="M13.1 15 Q12.5 13.7 10.5 13.7 Q8 13.7 8 15.8 Q8 17.6 10.5 18.3 Q13.1 19 13.1 21.2 Q13.1 23.2 10.5 23.2 Q8.4 23.2 7.8 21.8 M10.5 12 V13.7 M10.5 23.2 V25" fill="none" stroke="#fff" stroke-width="1.7"/></svg>
<div class="t" style="left:968.5px;top:481.7px;font-size:16.7px;color:#0a1464;">SI2504-0001</div>
<svg class="abs" style="left:1109.6px;top:483.7px;" width="14.8" height="16.3" viewBox="0 0 14.8 16.3"><rect x="1.3" y="0.2" width="12.3" height="15.3" fill="#6b6bb3"/><rect x="0" y="15.2" width="14.8" height="1.1" fill="#6b6bb3"/><g fill="#fff"><rect x="4.6" y="2.2" width="1.7" height="1.7"/><rect x="8.6" y="2.2" width="1.7" height="1.7"/><rect x="4.6" y="5.6" width="1.7" height="1.7"/><rect x="8.6" y="5.6" width="1.7" height="1.7"/><rect x="4.6" y="8.9" width="1.7" height="1.7"/><rect x="8.6" y="8.9" width="1.7" height="1.7"/><rect x="6.5" y="12.5" width="1.8" height="2.8"/></g></svg>
<div class="t" style="left:1129px;top:481.7px;font-size:16.7px;color:#0a1464;">Euro Car Part</div>
<div class="t" style="left:1214px;width:200px;text-align:right;top:481.7px;font-size:16.7px;color:#0b6a6a">5.94</div>
<div class="t" style="left:1446px;top:481.7px;font-size:16.7px;color:#1a1a1a;">21/04/2025</div>
<div class="abs" style="left:1543.8px;top:481.1px;width:18.4px;height:18.4px;border-radius:50%;background:#bb9129"></div>
<div class="abs" style="left:943px;top:561px;width:632px;height:92px;border:1px solid #d7d7d7;background:#fff"></div>
<div class="abs" style="left:944px;top:562px;width:630px;height:48px;background:#ebecef"></div>
<div class="t" style="left:953.9px;top:575.5px;font-size:16.7px;color:#333a4c;">Social/fiscal taxes to pay</div>
<div class="t" style="left:1209.7px;top:575.5px;font-size:16.7px;color:#333a4c;">Due date</div>
<div class="t" style="left:1337.5px;top:575.5px;font-size:16.7px;color:#333a4c;">Amount (inc. tax)</div>
<div class="t" style="left:1494.5px;top:575.5px;font-size:16.7px;color:#333a4c;">Paid</div>
<div class="abs" style="left:944px;top:610px;width:630px;height:42px;background:#e6edf5"></div>
<div class="t" style="left:951.8px;top:621.7px;font-size:16.7px;color:#9a9a9a;">None</div>
</body></html>
